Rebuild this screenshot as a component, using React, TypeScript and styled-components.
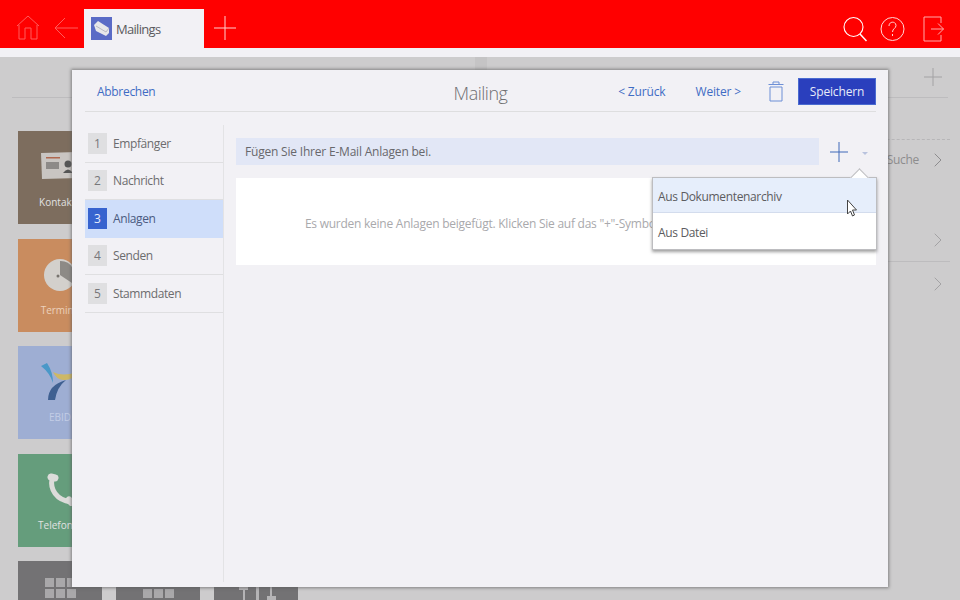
import React from 'react'
import styled, { createGlobalStyle } from 'styled-components'
import { ChevronRight } from 'lucide-react'

const GlobalStyle = createGlobalStyle`
    html, body {
        margin: 0;
        height: 100%;
        overflow: hidden;
        background: #cdcccd;
        font-family: "Open Sans", "Noto Sans", sans-serif;
        font-size: 12px;
    }
`

const SPage = styled.div`
    position: relative;
    width: 960px;
    height: 600px;
    overflow: hidden;
`

const SHeader = styled.header`
    height: 48px;
    background: #ff0000;
    display: flex;
    align-items: flex-end;
    padding: 0 16px;
    box-sizing: border-box;
`
const SHeaderIcon = styled.span<{ $gap?: number }>`
    display: flex;
    align-self: center;
    padding-top: 7px;
    margin-left: ${props => props.$gap || 0}px;
`
const STab = styled.div`
    width: 120px;
    height: 39px;
    margin-left: 6px;
    background: #f2f1f5;
    display: flex;
    align-items: center;
    padding-left: 7px;
    box-sizing: border-box;
    gap: 4px;
    font-size: 13px;
    color: #5a5a5e;
    letter-spacing: -0.7px;
`
const STabIcon = styled.span`
    width: 21px;
    height: 23px;
    background: #5a6bc6;
    display: flex;
    align-items: center;
    justify-content: center;
`
const SHeaderRight = styled.div`
    margin-left: auto;
    align-self: center;
    display: flex;
    align-items: center;
    gap: 13px;
    padding-top: 9px;
    & > svg:last-child {
        margin-left: 5px;
    }
`
const SStrip = styled.div`
    height: 9px;
    background: #f2f1f5;
`

const SBackdrop = styled.main`
    position: relative;
    height: 543px;
    background: #cdcccd;
    padding: 0 10px 0 12px;
    box-sizing: border-box;
    &::before {
        content: '';
        position: absolute;
        left: 475px;
        top: 0;
        width: 12px;
        height: 13px;
        background: #c5c4c5;
    }
`
const SBackTop = styled.div`
    height: 40px;
    margin-right: 2px;
    border-bottom: 1px solid #bdbcbe;
    display: flex;
    justify-content: flex-end;
    align-items: center;
    padding-right: 6px;
`
const SBackBody = styled.div`
    display: flex;
    justify-content: space-between;
`
const STiles = styled.div`
    padding: 33px 0 0 6px;
    display: grid;
    grid-template-columns: 84px 84px 84px;
    grid-auto-rows: 93px;
    gap: 14.5px 14px;
`
const STile = styled.div<{ $bg: string; $row?: boolean; $text?: string }>`
    grid-column: ${props => (props.$row ? 'auto' : '1 / span 3')};
    width: 84px;
    background: ${props => props.$bg};
    color: ${props => props.$text || '#e2e2e2'};
    font-size: 10px;
    display: flex;
    flex-direction: column;
    align-items: center;
    padding-top: 17px;
    box-sizing: border-box;
    white-space: nowrap;
    overflow: hidden;
`
const STileIcon = styled.div`
    height: 47px;
    flex: none;
`
const SBackRows = styled.div`
    width: 300px;
    padding-top: 41px;
    color: #8b8a8c;
`
const SBackRow = styled.div<{ $height: number; $line?: string; $top?: number }>`
    height: ${props => props.$height}px;
    display: flex;
    justify-content: flex-end;
    align-items: center;
    gap: 7px;
    padding-top: ${props => props.$top || 0}px;
    box-sizing: border-box;
    border-top: ${props => props.$line || 'none'};
    color: #8d8c8e;
    font-size: 12px;
    letter-spacing: -0.3px;
`

const SModal = styled.section`
    position: absolute;
    left: 72px;
    top: 70px;
    width: 816px;
    height: 517px;
    background: #f2f1f5;
    box-shadow: 0 0 3px 1px rgba(90, 90, 90, 0.65);
    padding: 0 12px 5px 13px;
    box-sizing: border-box;
    display: flex;
    flex-direction: column;
`
const SModalHead = styled.div`
    height: 42px;
    flex: none;
    padding-top: 2px;
    border-bottom: 1px solid #dededf;
    display: grid;
    grid-template-columns: 1fr auto 1fr;
    align-items: center;
    box-sizing: border-box;
`
const SLink = styled.a<{ $gap?: number }>`
    color: #3f6cc4;
    font-size: 12px;
    letter-spacing: -0.15px;
    white-space: nowrap;
    margin-left: ${props => props.$gap || 0}px;
`
const SCancel = styled(SLink)`
    padding-left: 12px;
    letter-spacing: -0.3px;
`
const STitle = styled.div`
    font-size: 18px;
    font-weight: 300;
    color: #6f6f72;
    letter-spacing: -0.5px;
    padding-top: 2px;
`
const SActions = styled.div`
    display: flex;
    justify-content: flex-end;
    align-items: center;
`
const SDelete = styled.span`
    display: flex;
    margin: 0 14px 0 27px;
`
const SSave = styled.button`
    width: 78px;
    height: 27px;
    border: 1px solid #4a6bd0;
    background: #2a3fbd;
    color: #e8ebf8;
    font: inherit;
    font-size: 12px;
    letter-spacing: -0.15px;
    padding: 0;
`
const SModalBody = styled.div`
    flex: 1;
    display: flex;
    padding-top: 13px;
    min-height: 0;
`
const SSteps = styled.nav`
    width: 138px;
    flex: none;
    border-right: 1px solid #e3e3e5;
    margin-right: 12px;
`
const SStep = styled.div<{ $active?: boolean }>`
    height: 37.5px;
    box-sizing: border-box;
    display: flex;
    align-items: center;
    padding-left: 3px;
    gap: 6px;
    background: ${props => (props.$active ? '#cfdefa' : 'transparent')};
    border-bottom: 1px solid ${props => (props.$active ? '#cfdefa' : '#dfdfe1')};
    color: ${props => (props.$active ? '#4a5a80' : '#6c6c6e')};
    font-size: 12px;
    letter-spacing: -0.4px;
`
const SStepNo = styled.span<{ $active?: boolean }>`
    width: 19px;
    height: 21px;
    display: flex;
    align-items: center;
    justify-content: center;
    background: ${props => (props.$active ? '#3763cf' : '#dfdfe1')};
    color: ${props => (props.$active ? '#e6ecfb' : '#77777a')};
    letter-spacing: 0;
`
const SContent = styled.div`
    flex: 1;
    padding-top: 13px;
`
const SToolbar = styled.div`
    display: flex;
    align-items: center;
    height: 27px;
`
const SInfo = styled.div`
    width: 583px;
    height: 27px;
    background: #e2e7f6;
    color: #68686c;
    display: flex;
    align-items: center;
    padding-left: 9px;
    box-sizing: border-box;
    letter-spacing: -0.2px;
`
const SPlus = styled.span`
    display: flex;
    margin-left: 11px;
`
const SCaret = styled.span`
    width: 0;
    height: 0;
    margin: 3px 0 0 14px;
    border-left: 3px solid transparent;
    border-right: 3px solid transparent;
    border-top: 3px solid #b9c3de;
`
const SEmpty = styled.div`
    margin-top: 13px;
    height: 87px;
    padding-top: 3px;
    box-sizing: border-box;
    background: #fff;
    display: flex;
    align-items: center;
    justify-content: center;
    color: #a9a9ac;
    white-space: nowrap;
    letter-spacing: -0.25px;
`
const SMenu = styled.div`
    position: absolute;
    left: 652px;
    top: 177px;
    width: 225px;
    height: 73px;
    background: #fff;
    border: 1px solid #bdbdc0;
    box-sizing: border-box;
    box-shadow: 0 2px 3px rgba(80, 80, 80, 0.55);
    display: flex;
    flex-direction: column;
    &::before {
        content: '';
        position: absolute;
        right: 10px;
        top: -7px;
        width: 13px;
        height: 13px;
        background: #fff;
        border-left: 1px solid #bdbdc0;
        border-top: 1px solid #bdbdc0;
        box-sizing: border-box;
        transform: rotate(45deg);
    }
`
const SMenuItem = styled.div<{ $hover?: boolean }>`
    height: ${props => (props.$hover ? 35 : 36)}px;
    position: relative;
    display: flex;
    align-items: center;
    padding: 2px 0 0 5px;
    box-sizing: border-box;
    color: #5c5c60;
    background: ${props => (props.$hover ? '#e6eefb' : 'transparent')};
    border-bottom: ${props => (props.$hover ? '1px solid #d3dced' : 'none')};
    letter-spacing: -0.35px;
`
const SCursor = styled.svg`
    position: absolute;
    left: 846px;
    top: 199px;
`

const steps = ['Empfänger', 'Nachricht', 'Anlagen', 'Senden', 'Stammdaten']

const Grid = () => (
    <svg width="31" height="40" viewBox="0 0 31 40" fill="#a9a8aa">
        {[0, 1, 2].map(r => [0, 1, 2].map(c => (
            <rect key={`${r}${c}`} x={c * 11} y={r * 11} width="9" height="9" />
        )))}
    </svg>
)

const Sliders = () => (
    <svg width="40" height="40" viewBox="0 0 40 40" fill="#b5b4b6">
        <rect x="7" y="8" width="2" height="32" />
        <rect x="20" y="8" width="3" height="32" />
        <rect x="34" y="8" width="2" height="32" />
        <rect x="3" y="8" width="9" height="4" />
        <rect x="31" y="18" width="9" height="6" />
    </svg>
)

const App = () => {
    return (
        <SPage>
            <GlobalStyle />
            <SHeader>
                <SHeaderIcon>
                    <svg width="24" height="26" viewBox="0 0 24 26" fill="none" stroke="#ff5c5c" strokeWidth="1">
                        <path d="M1 11 12 1l11 10M3 10v14h6V13h6v11h6V10" />
                    </svg>
                </SHeaderIcon>
                <SHeaderIcon $gap={14}>
                    <svg width="24" height="24" viewBox="0 0 24 24" fill="none" stroke="#ff5c5c" strokeWidth="1">
                        <path d="M11 2 1 12l10 10M1 12h23" />
                    </svg>
                </SHeaderIcon>
                <STab>
                    <STabIcon>
                        <svg width="17" height="17" viewBox="0 0 17 17">
                            <path d="M1 5 5 1l11 7v5l-3 3L3 11Z" fill="#e7e7ea" />
                            <path d="M3 6l10 6 3-4" fill="none" stroke="#b9b9c2" strokeWidth="1" />
                        </svg>
                    </STabIcon>
                    Mailings
                </STab>
                <SHeaderIcon $gap={10}>
                    <svg width="22" height="24" viewBox="0 0 22 24" stroke="#ffd0d0" strokeWidth="1">
                        <path d="M0 12h22M11 0v24" />
                    </svg>
                </SHeaderIcon>
                <SHeaderRight>
                    <svg width="24" height="26" viewBox="0 0 24 26" fill="none" stroke="#fff" strokeWidth="1.1">
                        <circle cx="10.5" cy="11" r="9.5" />
                        <path d="m17 18 6.5 7" strokeWidth="1.5" />
                    </svg>
                    <svg width="25" height="26" viewBox="0 0 25 26" fill="none" stroke="#ffd6d6" strokeWidth="1">
                        <circle cx="12.5" cy="13" r="11.5" />
                        <path d="M9 10c0-5 7-5 7-.5 0 3-3.500 3-3.500 6.500M12.500 18v2" />
                    </svg>
                    <svg width="21" height="26" viewBox="0 0 21 26" fill="none" stroke="#ffaaaa" strokeWidth="1">
                        <path d="M18 7V1H1v24h17v-6M8 13h12.500M15 7.500l5.500 5.500-5.500 5.500" />
                    </svg>
                </SHeaderRight>
            </SHeader>
            <SStrip />
            <SBackdrop>
                <SBackTop>
                    <svg width="18" height="18" viewBox="0 0 18 18" stroke="#a3a2a4" strokeWidth="1">
                        <path d="M0 9h18M9 0v18" />
                    </svg>
                </SBackTop>
                <SBackBody>
                    <STiles>
                        <STile $bg="#7d6d5e">
                            <STileIcon>
                                <svg width="40" height="32" viewBox="0 0 40 32">
                                    <path d="M1 5 38 4l1 26-37 1Z" fill="#c9c5c2" />
                                    <rect x="6" y="9" width="14" height="1.500" fill="#b0684f" />
                                    <rect x="6" y="14" width="13" height="7" fill="#8d8a88" />
                                    <circle cx="28" cy="16" r="3.500" fill="#555" />
                                    <path d="M23 25q5-7 10 0Z" fill="#555" />
                                </svg>
                            </STileIcon>
                            Kontakte
                        </STile>
                        <STile $bg="#c98c5f" $text="#ecd2bc">
                            <STileIcon>
                                <svg width="32" height="35" viewBox="0 0 32 35">
                                    <circle cx="16" cy="19" r="16" fill="#d3d0cc" />
                                    <path d="M16 19V5a14 14 0 0 1 12 22Z" fill="#8d8a86" />
                                    <circle cx="14" cy="20" r="1.500" fill="#77736e" />
                                </svg>
                            </STileIcon>
                            Termine
                        </STile>
                        <STile $bg="#9eaed3" $text="#c3cde6">
                            <STileIcon>
                                <svg width="42" height="38" viewBox="0 0 42 38" fill="none">
                                    <path d="M2 3 8 0q6 9 6 20Q11 10 2 3Z" fill="#4a98c8" />
                                    <path d="M14 9q10 5 24 0-4 9-14 8-7-1-10-8Z" fill="#cdb866" />
                                    <path d="M9 37q0-15 18-20-9 7-11 20Z" fill="#3f6091" />
                                </svg>
                            </STileIcon>
                            EBID
                        </STile>
                        <STile $bg="#659d7c">
                            <STileIcon>
                                <svg width="28" height="35" viewBox="0 0 28 35" fill="none" stroke="#dcdcda" strokeLinecap="round">
                                    <path d="M6 8C4 18 10 29 25 31" strokeWidth="5" />
                                    <path d="M5 6l4 1M23 29l3 3" strokeWidth="7" />
                                </svg>
                            </STileIcon>
                            Telefonat
                        </STile>
                        <STile $bg="#737274" $row><Grid /></STile>
                        <STile $bg="#737274" $row><Grid /></STile>
                        <STile $bg="#737274" $row><Sliders /></STile>
                    </STiles>
                    <SBackRows>
                        <SBackRow $height={40} $line="1px dashed #b7b6b8">
                            Suche
                            <ChevronRight size={24} strokeWidth={1} color="#8d8c8e" />
                        </SBackRow>
                        <SBackRow $height={82} $top={40}>
                            <ChevronRight size={24} strokeWidth={1} color="#a3a2a4" />
                        </SBackRow>
                        <SBackRow $height={44} $line="1px solid #bdbcbe">
                            <ChevronRight size={24} strokeWidth={1} color="#a3a2a4" />
                        </SBackRow>
                    </SBackRows>
                </SBackBody>
            </SBackdrop>

            <SModal>
                <SModalHead>
                    <SCancel>Abbrechen</SCancel>
                    <STitle>Mailing</STitle>
                    <SActions>
                        <SLink>&lt; Zurück</SLink>
                        <SLink $gap={30}>Weiter &gt;</SLink>
                        <SDelete>
                            <svg width="16" height="21" viewBox="0 0 16 21" fill="none" stroke="#6d8fd6" strokeWidth="1">
                                <path d="M.5 3.500h15M5 3V1h6v2M2 6h12v14H2Z" />
                            </svg>
                        </SDelete>
                        <SSave>Speichern</SSave>
                    </SActions>
                </SModalHead>
                <SModalBody>
                    <SSteps>
                        {steps.map((step, i) => (
                            <SStep key={step} $active={i === 2}>
                                <SStepNo $active={i === 2}>{i + 1}</SStepNo>
                                {step}
                            </SStep>
                        ))}
                    </SSteps>
                    <SContent>
                        <SToolbar>
                            <SInfo>Fügen Sie Ihrer E-Mail Anlagen bei.</SInfo>
                            <SPlus>
                                <svg width="18" height="20" viewBox="0 0 18 20" stroke="#3f68b8" strokeWidth="1">
                                    <path d="M0 10h18M9 0v20" />
                                </svg>
                            </SPlus>
                            <SCaret />
                        </SToolbar>
                        <SEmpty>Es wurden keine Anlagen beigefügt. Klicken Sie auf das "+"-Symbol, um Anlagen hinzuzufügen.</SEmpty>
                    </SContent>
                </SModalBody>
            </SModal>

            <SMenu>
                <SMenuItem $hover>Aus Dokumentenarchiv</SMenuItem>
                <SMenuItem>Aus Datei</SMenuItem>
            </SMenu>
            <SCursor width="12" height="19" viewBox="0 0 12 19">
                <path d="M1.500 1v14l3-3 2 5 2-1-2-5h4Z" fill="#fff" stroke="#444" strokeWidth="1" />
            </SCursor>
        </SPage>
    )
}

export default App
